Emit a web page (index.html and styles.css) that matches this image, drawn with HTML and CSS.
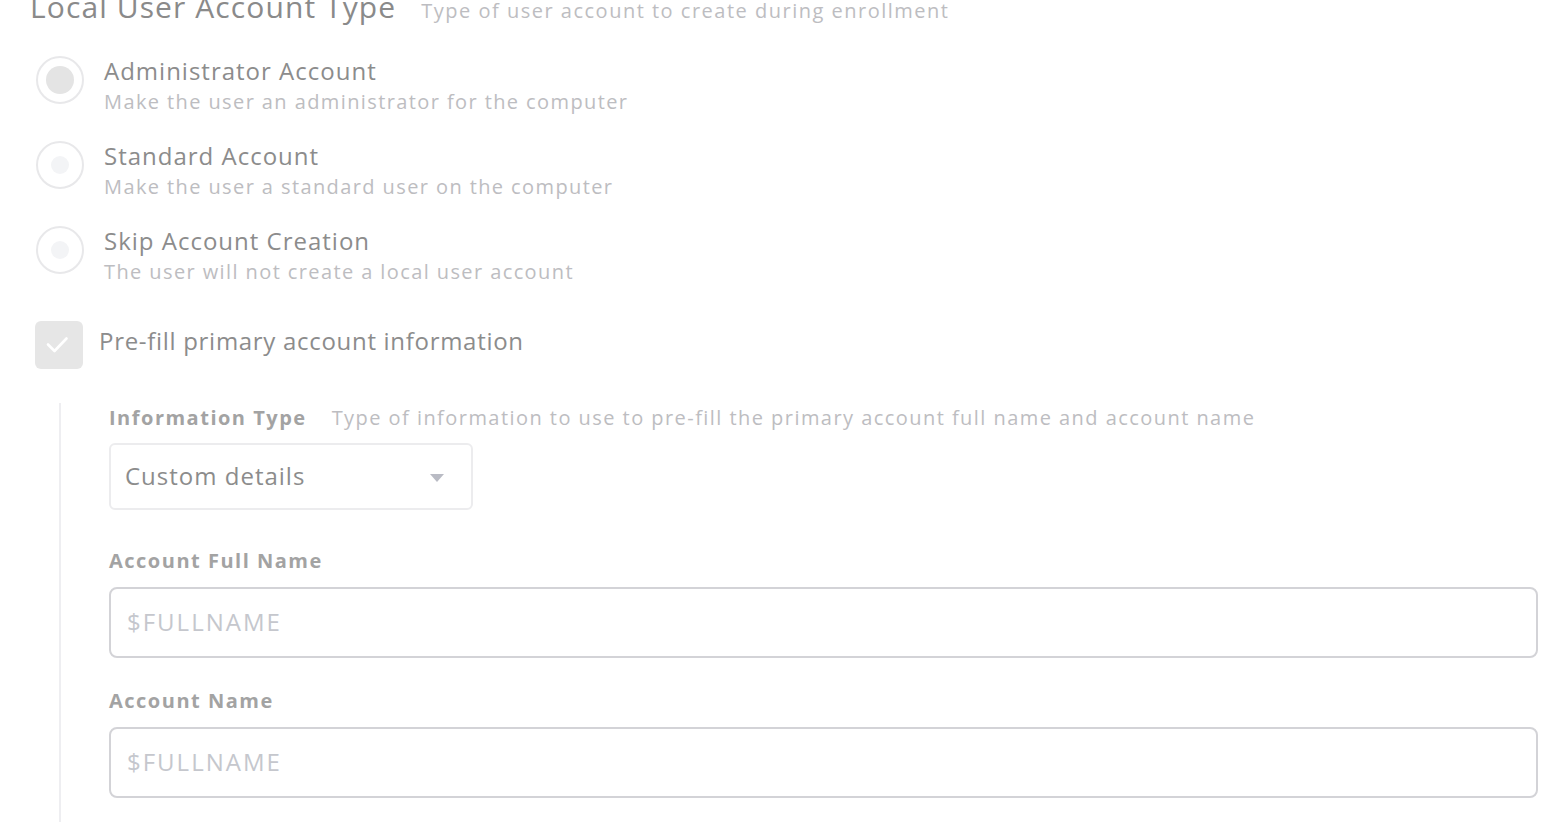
FILE: index.html
```html
<!DOCTYPE html>
<html>
<head>
<meta charset="utf-8">
<link rel="stylesheet" href="styles.css">
</head>
<body>
<div class="page">
  <div class="section-head">
    <span class="section-title">Local User Account Type</span>
    <span class="section-desc">Type of user account to create during enrollment</span>
  </div>

  <div class="options">
    <div class="option">
      <span class="radio selected"><span class="dot"></span></span>
      <div class="option-text">
        <div class="option-title">Administrator Account</div>
        <div class="option-sub">Make the user an administrator for the computer</div>
      </div>
    </div>
    <div class="option">
      <span class="radio"><span class="dot"></span></span>
      <div class="option-text">
        <div class="option-title">Standard Account</div>
        <div class="option-sub">Make the user a standard user on the computer</div>
      </div>
    </div>
    <div class="option">
      <span class="radio"><span class="dot"></span></span>
      <div class="option-text">
        <div class="option-title">Skip Account Creation</div>
        <div class="option-sub">The user will not create a local user account</div>
      </div>
    </div>
  </div>

  <div class="check-row">
    <span class="checkbox">
      <svg width="28" height="28" viewBox="0 0 28 28"><path d="M3 13.5l6.5 6.5L21.5 7.5" fill="none" stroke="#ffffff" stroke-width="2.6" stroke-linecap="round" stroke-linejoin="round"/></svg>
    </span>
    <span class="check-label">Pre-fill primary account information</span>
  </div>

  <div class="nested">
    <div class="field-label-row">
      <span class="field-label">Information Type</span>
      <span class="field-desc">Type of information to use to pre-fill the primary account full name and account name</span>
    </div>
    <div class="select">
      <span class="select-text">Custom details</span>
      <span class="caret"></span>
    </div>

    <div class="field-label-row after-select">
      <span class="field-label">Account Full Name</span>
    </div>
    <div class="input"><span class="placeholder">$FULLNAME</span></div>

    <div class="field-label-row after-input">
      <span class="field-label">Account Name</span>
    </div>
    <div class="input"><span class="placeholder">$FULLNAME</span></div>
  </div>
</div>
</body>
</html>
```

FILE: styles.css
```css
* { box-sizing: border-box; }
html, body { margin: 0; padding: 0; background: #ffffff; overflow: hidden; }
body {
  font-family: "Open Sans", "Lato", sans-serif;
  color: #8c8c8c;
  width: 1550px;
  height: 822px;
}
.page {
  padding-left: 30px;
  margin-top: -11px;
}
.section-head {
  display: flex;
  align-items: baseline;
  gap: 25px;
  height: 36px;
  line-height: 36px;
  margin-bottom: 31px;
}
.section-title {
  font-size: 30px;
  color: #8a8a8a;
  letter-spacing: 1.1px;
}
.section-desc {
  font-size: 20px;
  color: #bdbdc1;
  letter-spacing: 1.5px;
}
.options {
  display: flex;
  flex-direction: column;
  gap: 24px;
  padding-left: 6px;
}
.option {
  display: flex;
  align-items: flex-start;
  gap: 20px;
}
.radio {
  width: 48px;
  height: 48px;
  border-radius: 50%;
  border: 2px solid #e8e8ea;
  display: flex;
  align-items: center;
  justify-content: center;
  flex: none;
}
.radio .dot {
  width: 18px;
  height: 18px;
  border-radius: 50%;
  background: #f3f4f6;
}
.radio.selected .dot {
  width: 28px;
  height: 28px;
  background: #e4e4e4;
}
.option-title {
  font-size: 24px;
  line-height: 30px;
  height: 30px;
  color: #8c8c8c;
  letter-spacing: 1px;
}
.option-sub {
  font-size: 20px;
  line-height: 30px;
  margin-top: 1px;
  color: #bdbdc1;
  letter-spacing: 1.4px;
}
.check-row {
  display: flex;
  align-items: center;
  gap: 16px;
  margin-top: 34px;
  padding-left: 5px;
}
.checkbox {
  width: 48px;
  height: 48px;
  border-radius: 6px;
  background: #e6e6e6;
  display: flex;
  align-items: center;
  justify-content: center;
  flex: none;
}
.check-label {
  font-size: 24px;
  color: #8c8c8c;
  letter-spacing: 0.7px;
  margin-top: -9px;
}
.nested {
  margin-top: 34px;
  margin-left: 29px;
  border-left: 2px solid #eeeef1;
  padding-left: 48px;
  padding-right: 12px;
  padding-top: 3px;
  padding-bottom: 40px;
}
.field-label-row {
  display: flex;
  align-items: baseline;
  gap: 25px;
  line-height: 24px;
  height: 24px;
}
.field-label-row.after-select { margin-top: 39px; }
.field-label-row.after-input { margin-top: 31px; }
.field-label {
  font-size: 20px;
  font-weight: 700;
  color: #a3a3a3;
  letter-spacing: 1.5px;
}
.field-desc {
  font-size: 20px;
  color: #bdbdc1;
  letter-spacing: 1.45px;
}
.select {
  margin-top: 13px;
  width: 364px;
  height: 67px;
  border: 2px solid #ececee;
  border-radius: 6px;
  display: flex;
  align-items: center;
  justify-content: space-between;
  padding: 0 27px 0 14px;
}
.select-text {
  font-size: 24px;
  color: #8c8c8c;
  letter-spacing: 1px;
  margin-top: -2px;
}
.caret {
  width: 0;
  height: 0;
  border-left: 7px solid transparent;
  border-right: 7px solid transparent;
  border-top: 8px solid #b9bbc4;
  margin-top: 3px;
}
.input {
  margin-top: 14px;
  height: 71px;
  border: 2px solid #d3d3d7;
  border-radius: 8px;
  display: flex;
  align-items: center;
  padding-left: 16px;
}
.placeholder {
  font-size: 24px;
  color: #c5c7cd;
  letter-spacing: 2px;
  margin-top: -2px;
}
```
